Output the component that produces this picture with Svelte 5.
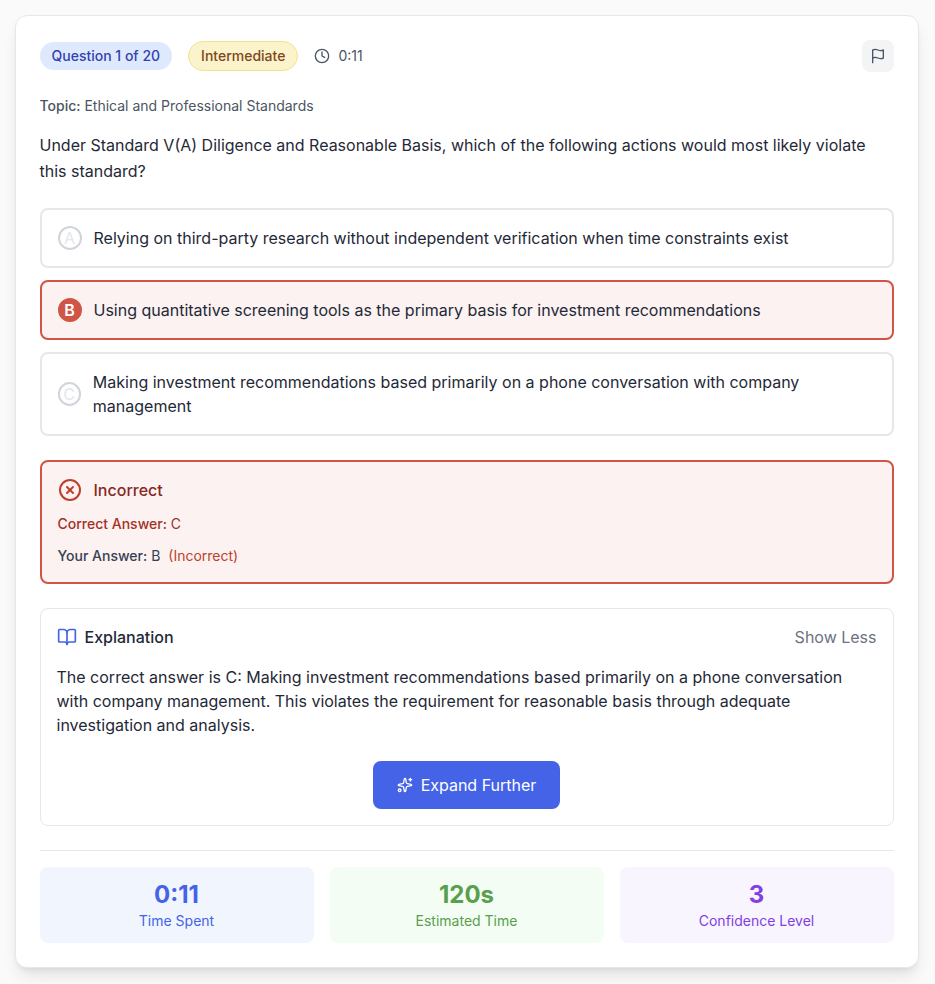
<script>
    let flagged = false;
    let expanded = true;
    let selected = 'B';
    const correct = 'C';

    const question = {
        number: 1,
        total: 20,
        difficulty: 'Intermediate',
        topic: 'Ethical and Professional Standards',
        text: 'Under Standard V(A) Diligence and Reasonable Basis, which of the following actions would most likely violate this standard?',
        explanation: 'The correct answer is C: Making investment recommendations based primarily on a phone conversation with company management. This violates the requirement for reasonable basis through adequate investigation and analysis.'
    };

    const options = [
        { id: 'A', text: 'Relying on third-party research without independent verification when time constraints exist' },
        { id: 'B', text: 'Using quantitative screening tools as the primary basis for investment recommendations' },
        { id: 'C', text: 'Making investment recommendations based primarily on a phone conversation with company management' }
    ];

    const stats = [
        { value: '0:11', label: 'Time Spent', color: 'blue' },
        { value: '120s', label: 'Estimated Time', color: 'green' },
        { value: '3', label: 'Confidence Level', color: 'purple' }
    ];
</script>

<main class="card">
    <header>
        <div class="meta">
            <span class="badge number">Question {question.number} of {question.total}</span>
            <span class="badge difficulty">{question.difficulty}</span>
            <span class="timer">
                <svg class="icon" width="16" height="16" viewBox="0 0 24 24">
                    <circle cx="12" cy="12" r="10" />
                    <path d="M12 6v6l4 2" />
                </svg>
                0:11
            </span>
        </div>
        <button class="flag" class:flagged aria-label="Flag question" on:click={() => flagged = !flagged}>
            <svg class="icon" width="16" height="16" viewBox="0 0 24 24">
                <path d="M4 15s1-1 4-1 5 2 8 2 4-1 4-1V3s-1 1-4 1-5-2-8-2-4 1-4 1z" />
                <path d="M4 22v-7" />
            </svg>
        </button>
    </header>

    <p class="topic"><strong>Topic:</strong> {question.topic}</p>
    <h1>{question.text}</h1>

    <div class="options">
        {#each options as option}
            <div class="option" class:wrong={option.id === selected}>
                <span class="letter">{option.id}</span>
                <span>{option.text}</span>
            </div>
        {/each}
    </div>

    <section class="result">
        <div class="result-title">
            <svg class="icon" width="24" height="24" viewBox="0 0 24 24">
                <circle cx="12" cy="12" r="10" />
                <path d="m15 9-6 6" />
                <path d="m9 9 6 6" />
            </svg>
            <span>Incorrect</span>
        </div>
        <p class="correct"><strong>Correct Answer:</strong> {correct}</p>
        <p class="yours"><strong>Your Answer:</strong> {selected}<span class="verdict">(Incorrect)</span></p>
    </section>

    <section class="explanation">
        <div class="explanation-head">
            <h2>
                <svg class="icon" width="20" height="20" viewBox="0 0 24 24">
                    <path d="M12 7v14" />
                    <path d="M3 18a1 1 0 0 1-1-1V4a1 1 0 0 1 1-1h5a4 4 0 0 1 4 4 4 4 0 0 1 4-4h5a1 1 0 0 1 1 1v13a1 1 0 0 1-1 1h-6a3 3 0 0 0-3 3 3 3 0 0 0-3-3z" />
                </svg>
                Explanation
            </h2>
            <button class="toggle" on:click={() => expanded = !expanded}>{expanded ? 'Show Less' : 'Show More'}</button>
        </div>
        {#if expanded}
            <p>{question.explanation}</p>
            <button class="expand">
                <svg class="icon" width="16" height="16" viewBox="0 0 24 24">
                    <path d="M11.017 2.814a1 1 0 0 1 1.966 0l1.051 5.558a2 2 0 0 0 1.594 1.594l5.558 1.051a1 1 0 0 1 0 1.966l-5.558 1.051a2 2 0 0 0-1.594 1.594l-1.051 5.558a1 1 0 0 1-1.966 0l-1.051-5.558a2 2 0 0 0-1.594-1.594l-5.558-1.051a1 1 0 0 1 0-1.966l5.558-1.051a2 2 0 0 0 1.594-1.594z" />
                    <path d="M20 2v4" />
                    <path d="M22 4h-4" />
                    <circle cx="4" cy="20" r="2" />
                </svg>
                Expand Further
            </button>
        {/if}
    </section>

    <footer>
        {#each stats as stat}
            <div class="stat {stat.color}">
                <div class="value">{stat.value}</div>
                <div class="label">{stat.label}</div>
            </div>
        {/each}
    </footer>
</main>

<style>
    :global(body) {
        background: #fafafa;
        color: #1f2937;
        font-family: Inter, "Liberation Sans", sans-serif;
        font-size: 16px;
        line-height: 24px;
    }
    .card {
        box-sizing: border-box;
        width: 904px;
        margin: 15px 14.5px;
        padding: 24px;
        background: #fff;
        border: 1px solid #e5e7eb;
        border-radius: 12px;
        box-shadow: 0 10px 15px -3px rgba(0, 0, 0, 0.1), 0 4px 6px -4px rgba(0, 0, 0, 0.1);
    }
    h1, h2, p {
        margin: 0;
        font-size: 16px;
        font-weight: 400;
    }
    strong {
        font-weight: 500;
    }
    button {
        border: none;
        padding: 0;
        background: none;
        font: inherit;
        cursor: pointer;
    }
    .icon {
        display: block;
        flex-shrink: 0;
        fill: none;
        stroke: currentColor;
        stroke-width: 2;
        stroke-linecap: round;
        stroke-linejoin: round;
    }

    header, .meta, .timer {
        display: flex;
        align-items: center;
    }
    header {
        justify-content: space-between;
        height: 32px;
    }
    .meta {
        gap: 16px;
        font-size: 14px;
        line-height: 20px;
    }
    .badge {
        padding: 4px 12px;
        border-radius: 15px;
        font-weight: 500;
    }
    .number {
        background: #dfe9fe;
        color: #3242ae;
    }
    .difficulty {
        background: #fbf3cb;
        border: 1px solid #f4e28a;
        color: #7f4719;
    }
    .timer {
        gap: 8px;
        color: #4b5563;
    }
    .flag {
        padding: 8px;
        border-radius: 8px;
        background: #f3f4f6;
        color: #4b5563;
    }
    .flagged {
        color: #d97706;
    }

    .topic {
        margin-top: 24px;
        font-size: 14px;
        line-height: 20px;
        color: #4b5563;
    }
    h1 {
        margin-top: 16px;
        line-height: 26px;
    }

    .options {
        display: grid;
        gap: 12px;
        margin: 24px 0;
    }
    .option {
        display: flex;
        align-items: center;
        gap: 12px;
        padding: 16px;
        border: 2px solid #e5e7eb;
        border-radius: 8px;
    }
    .letter {
        display: flex;
        align-items: center;
        justify-content: center;
        box-sizing: border-box;
        width: 24px;
        height: 24px;
        border: 2px solid #d1d5db;
        border-radius: 50%;
        color: #e5e7eb;
    }
    .wrong {
        background: #fbf2f1;
        border-color: #cf5546;
    }
    .wrong .letter {
        background: #cf5546;
        border-color: #cf5546;
        color: #fff;
        font-weight: 600;
    }

    .result {
        padding: 16px;
        border: 2px solid #cf5546;
        border-radius: 8px;
        background: #fbf2f1;
    }
    .result-title {
        display: flex;
        gap: 12px;
        color: #86291f;
        font-weight: 500;
    }
    .result-title .icon {
        color: #be3f2e;
    }
    .result p {
        margin-top: 12px;
        font-size: 14px;
        line-height: 20px;
    }
    .correct {
        color: #a33124;
    }
    .yours {
        color: #374151;
    }
    .verdict {
        margin-left: 8px;
        color: #be3f2e;
    }

    .explanation {
        margin-top: 24px;
        padding: 16px;
        border: 1px solid #e5e7eb;
        border-radius: 8px;
    }
    .explanation-head {
        display: flex;
        align-items: center;
        justify-content: space-between;
        margin-bottom: 16px;
    }
    h2 {
        display: flex;
        align-items: center;
        gap: 8px;
        font-weight: 500;
    }
    h2 .icon {
        color: #4463e7;
    }
    .toggle {
        color: #6b7280;
    }
    .expand {
        display: flex;
        align-items: center;
        gap: 8px;
        margin: 24px auto 0;
        padding: 12px 24px;
        border-radius: 8px;
        background: #4463e7;
        color: #fff;
    }

    footer {
        display: grid;
        grid-template-columns: repeat(3, 1fr);
        gap: 16px;
        margin-top: 24px;
        padding-top: 16px;
        border-top: 1px solid #e5e7eb;
    }
    .stat {
        padding: 12px;
        border-radius: 8px;
        text-align: center;
    }
    .value {
        font-size: 24px;
        font-weight: 700;
        line-height: 32px;
    }
    .label {
        font-size: 14px;
        line-height: 20px;
    }
    .blue {
        background: #f1f6fe;
        color: #4463e7;
    }
    .green {
        background: #f3fdf4;
        color: #5a9f4d;
    }
    .purple {
        background: #f8f5fe;
        color: #8240e3;
    }
</style>
